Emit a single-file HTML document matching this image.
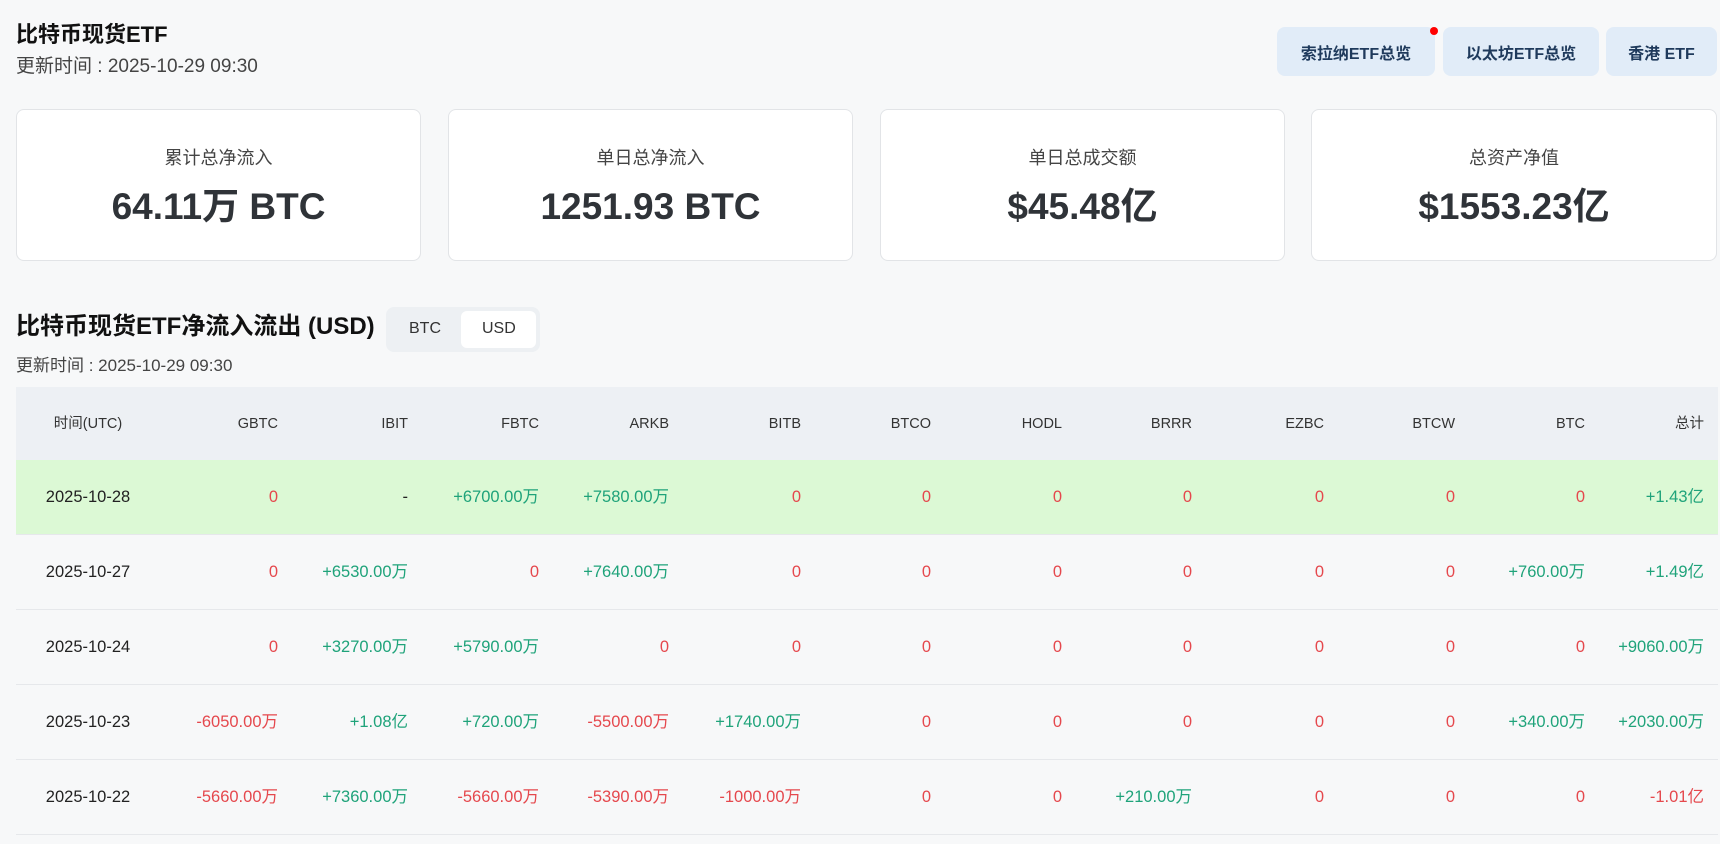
<!DOCTYPE html>
<html><head><meta charset="utf-8"><style>
*{margin:0;padding:0;box-sizing:border-box}
body{width:1720px;height:844px;overflow:hidden;background:#f7f8f9;font-family:"Liberation Sans","Noto Sans CJK SC",sans-serif;color:#222;position:relative}
.a{position:absolute;white-space:nowrap;line-height:1.2}
.t1{font-weight:bold;font-size:22px;color:#111}
.sub{font-size:19px;color:#444}
.btn{position:absolute;top:27px;height:49px;background:#e1ecf8;border-radius:8px;color:#1f3a5c;font-weight:bold;font-size:16px;display:flex;align-items:center;justify-content:center}
.card{position:absolute;top:109px;height:152px;background:#fff;border:1px solid #e2e4e7;border-radius:8px;text-align:center}
.card .l{position:absolute;left:0;right:0;top:36px;line-height:24px;font-size:18px;color:#444}
.card .v{position:absolute;left:0;right:0;top:74px;line-height:46px;height:46px;font-size:37px;font-weight:bold;color:#2f3338}
.tbl{position:absolute;left:16px;top:387px;width:1702px}
.row{position:relative;height:75px;border-bottom:1px solid #e6e8eb;font-size:16.5px}
.hd{height:73px;background:#edf0f4;color:#333;font-size:14.5px;border:none}
.row span{position:absolute;top:50%;transform:translateY(-50%);line-height:20px}
.g{color:#1fa37a}.r{color:#e5484d}
</style></head><body>
<div class="a t1" style="left:16px;top:22px">比特币现货ETF</div>
<div class="a sub" style="left:16px;top:56px">更新时间 : 2025-10-29 09:30</div>
<div class="btn" style="left:1277px;width:158px">索拉纳ETF总览</div>
<div class="a" style="left:1430px;top:27px;width:8px;height:8px;border-radius:50%;background:#f00"></div>
<div class="btn" style="left:1443px;width:156px">以太坊ETF总览</div>
<div class="btn" style="left:1606px;width:111px">香港 ETF</div>

<div class="card" style="left:16px;width:405px"><div class="l">累计总净流入</div><div class="v">64.11万 BTC</div></div>
<div class="card" style="left:448px;width:405px"><div class="l">单日总净流入</div><div class="v">1251.93 BTC</div></div>
<div class="card" style="left:880px;width:405px"><div class="l">单日总成交额</div><div class="v">$45.48亿</div></div>
<div class="card" style="left:1311px;width:406px"><div class="l">总资产净值</div><div class="v">$1553.23亿</div></div>

<div class="a t1" style="left:16px;top:313px;font-size:24px">比特币现货ETF净流入流出 (USD)</div>
<div class="a" style="left:386px;top:307px;width:154px;height:45px;background:#edf0f3;border-radius:8px"></div>
<div class="a" style="left:461px;top:311px;width:75px;height:37px;background:#fff;border-radius:6px"></div>
<div class="a" style="left:409px;top:319px;font-size:16px;color:#333">BTC</div>
<div class="a" style="left:482px;top:319px;font-size:16px;color:#333">USD</div>
<div class="a sub" style="left:16px;top:356px;font-size:17px">更新时间 : 2025-10-29 09:30</div>

<div class="tbl" id="t"></div>
<script>
var head=["GBTC","IBIT","FBTC","ARKB","BITB","BTCO","HODL","BRRR","EZBC","BTCW","BTC","总计"];
var rows=[
["2025-10-28","0","-","+6700.00万","+7580.00万","0","0","0","0","0","0","0","+1.43亿"],
["2025-10-27","0","+6530.00万","0","+7640.00万","0","0","0","0","0","0","+760.00万","+1.49亿"],
["2025-10-24","0","+3270.00万","+5790.00万","0","0","0","0","0","0","0","0","+9060.00万"],
["2025-10-23","-6050.00万","+1.08亿","+720.00万","-5500.00万","+1740.00万","0","0","0","0","0","+340.00万","+2030.00万"],
["2025-10-22","-5660.00万","+7360.00万","-5660.00万","-5390.00万","-1000.00万","0","0","+210.00万","0","0","0","-1.01亿"]];
var R=[278,408,539,669,801,931,1062,1192,1324,1455,1585,1704];
var h='<div class="row hd"><span style="left:72px;transform:translate(-50%,-50%)">时间(UTC)</span>';
head.forEach(function(c,i){h+='<span style="right:'+(1702-(R[i]-16))+'px">'+c+'</span>'});
h+='</div>';
rows.forEach(function(r,k){
h+='<div class="row" style="'+(k==0?'background:#dcf9d5':'')+'"><span style="left:72px;transform:translate(-50%,-50%)">'+r[0]+'</span>';
for(var i=1;i<r.length;i++){var v=r[i];var c=v=='-'?'':(v[0]=='+'?'g':'r');
h+='<span class="'+c+'" style="right:'+(1702-(R[i-1]-16))+'px">'+v+'</span>';}
h+='</div>';});
document.getElementById('t').innerHTML=h;
</script>
</body></html>
